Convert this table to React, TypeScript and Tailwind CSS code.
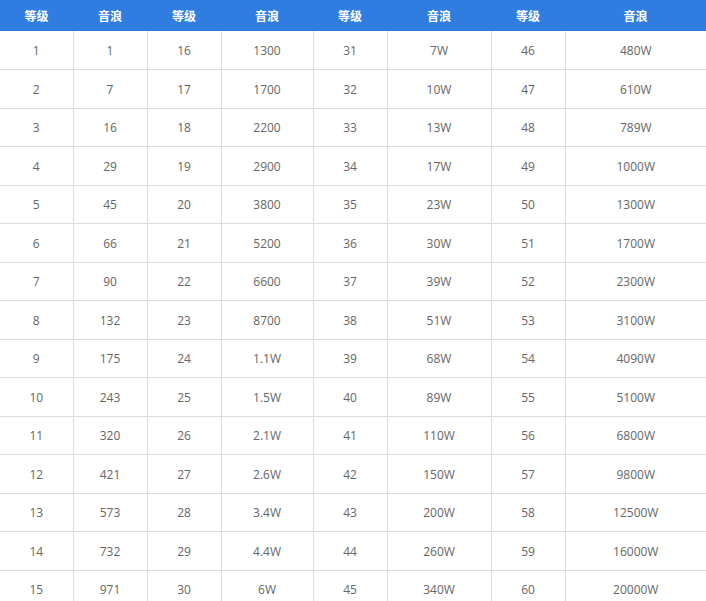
import React from 'react'

const widths = [73, 74, 74, 92, 74, 104, 74, 141]

const lv2 = ['1', '7', '16', '29', '45', '66', '90', '132', '175', '243', '320', '421', '573', '732', '971']
const lv17 = ['1300', '1700', '2200', '2900', '3800', '5200', '6600', '8700', '1.1W', '1.5W', '2.1W', '2.6W', '3.4W', '4.4W', '6W']
const lv32 = ['7W', '10W', '13W', '17W', '23W', '30W', '39W', '51W', '68W', '89W', '110W', '150W', '200W', '260W', '340W']
const lv47 = ['480W', '610W', '789W', '1000W', '1300W', '1700W', '2300W', '3100W', '4090W', '5100W', '6800W', '9800W', '12500W', '16000W', '20000W']

export default function App() {
  const rows = lv2.map((_, i) => [
    String(i + 1), lv2[i],
    String(i + 16), lv17[i],
    String(i + 31), lv32[i],
    String(i + 46), lv47[i],
  ])

  return (
    <div className="w-[706px] h-[601px] overflow-hidden bg-white" style={{ fontFamily: '"Open Sans", "Noto Sans CJK SC", sans-serif' }}>
      <table className="w-[706px] table-fixed border-collapse">
        <colgroup>
          {widths.map((w, i) => (
            <col key={i} style={{ width: w }} />
          ))}
        </colgroup>
        <thead>
          <tr className="bg-[#2f7de1] h-[31px]">
            {['等级', '音浪', '等级', '音浪', '等级', '音浪', '等级', '音浪'].map((h, i) => (
              <th key={i} className="p-0 text-center text-[12px] font-bold text-white" style={{ fontFamily: '"Noto Sans CJK SC", sans-serif' }}>
                {h}
              </th>
            ))}
          </tr>
        </thead>
        <tbody>
          {rows.map((r, i) => (
            <tr key={i} className="h-[38.5px]">
              {r.map((c, j) => (
                <td
                  key={j}
                  className={`p-0 pt-[2px] text-center text-[12px] text-[#666] border-b border-[#dcdcdc] ${j > 0 ? 'border-l' : ''}`}
                >
                  {c}
                </td>
              ))}
            </tr>
          ))}
        </tbody>
      </table>
    </div>
  )
}
